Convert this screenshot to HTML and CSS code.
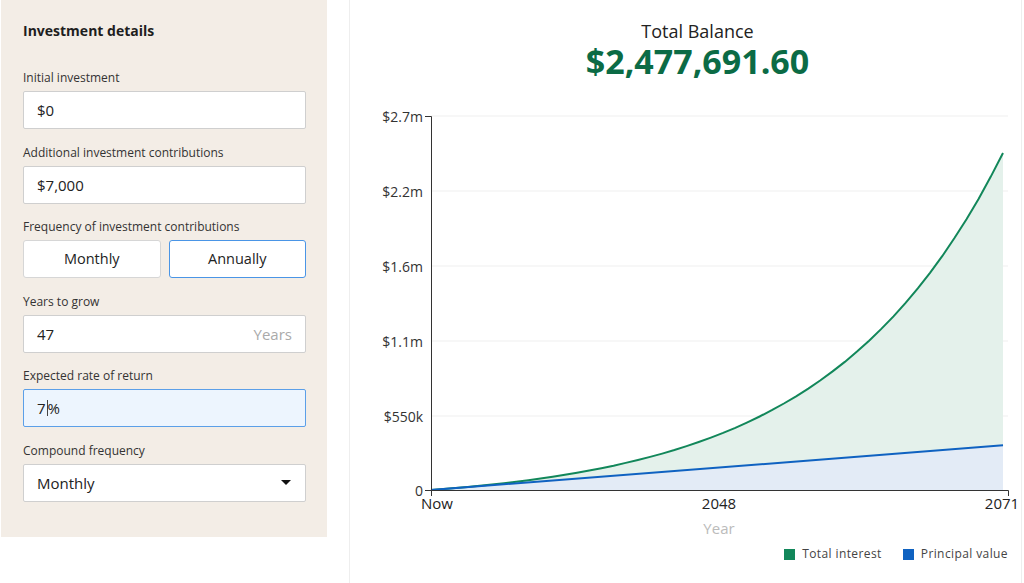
FILE: index.html
```html
<!DOCTYPE html>
<html lang="en">
<head>
    <meta charset="UTF-8">
    <title>Compound Interest Calculator</title>
    <link rel="stylesheet" href="styles.css">
</head>
<body>
    <aside class="panel">
        <h2>Investment details</h2>

        <div class="field">
            <label>Initial investment</label>
            <div class="box">$0</div>
        </div>

        <div class="field">
            <label>Additional investment contributions</label>
            <div class="box">$7,000</div>
        </div>

        <div class="field">
            <label>Frequency of investment contributions</label>
            <div class="toggle">
                <div class="toggle-btn">Monthly</div>
                <div class="toggle-btn active">Annually</div>
            </div>
        </div>

        <div class="field">
            <label>Years to grow</label>
            <div class="box with-unit">47<span class="unit">Years</span></div>
        </div>

        <div class="field">
            <label>Expected rate of return</label>
            <div class="box focused">7<span class="caret"></span>%</div>
        </div>

        <div class="field">
            <label>Compound frequency</label>
            <div class="box with-unit">Monthly<span class="arrow"></span></div>
        </div>
    </aside>

    <section class="results">
        <div class="summary">
            <div class="summary-title">Total Balance</div>
            <div class="summary-amount">$2,477,691.60</div>
        </div>

        <svg class="chart" viewBox="350 100 671 440" width="671" height="440">
            <!-- grid -->
            <g class="grid">
                <line x1="431" y1="116" x2="1008" y2="116"/>
                <line x1="431" y1="191" x2="1008" y2="191"/>
                <line x1="431" y1="266" x2="1008" y2="266"/>
                <line x1="431" y1="341" x2="1008" y2="341"/>
                <line x1="431" y1="416" x2="1008" y2="416"/>
            </g>

            <!-- areas -->
            <polygon class="area-interest" points="431,490 443.2,489.0 455.3,488.0 467.5,486.9 479.7,485.8 491.9,484.5 504,483.2 516.2,481.7 528.4,480.2 540.5,478.5 552.7,476.7 564.9,474.8 577,472.7 589.2,470.5 601.4,468.2 613.6,465.7 625.7,462.9 637.9,460 650.1,456.9 662.2,453.6 674.4,450 686.6,446.1 698.7,442 710.9,437.6 723.1,432.9 735.3,427.8 747.4,422.3 759.6,416.5 771.8,410.2 783.9,403.5 796.1,396.3 808.3,388.6 820.5,380.3 832.6,371.4 844.8,361.9 857,351.6 869.1,340.7 881.3,328.9 893.5,316.4 905.6,302.8 917.8,288.4 930,272.8 942.2,256.2 954.3,238.3 966.5,219.2 978.7,198.7 990.8,176.6 1003,153 1003,490"/>
            <polygon class="area-principal" points="431,490 1003,445.3 1003,490"/>

            <polyline class="line-interest" points="431,490 443.2,489.0 455.3,488.0 467.5,486.9 479.7,485.8 491.9,484.5 504,483.2 516.2,481.7 528.4,480.2 540.5,478.5 552.7,476.7 564.9,474.8 577,472.7 589.2,470.5 601.4,468.2 613.6,465.7 625.7,462.9 637.9,460 650.1,456.9 662.2,453.6 674.4,450 686.6,446.1 698.7,442 710.9,437.6 723.1,432.9 735.3,427.8 747.4,422.3 759.6,416.5 771.8,410.2 783.9,403.5 796.1,396.3 808.3,388.6 820.5,380.3 832.6,371.4 844.8,361.9 857,351.6 869.1,340.7 881.3,328.9 893.5,316.4 905.6,302.8 917.8,288.4 930,272.8 942.2,256.2 954.3,238.3 966.5,219.2 978.7,198.7 990.8,176.6 1003,153"/>
            <line class="line-principal" x1="431" y1="490" x2="1003" y2="445.3"/>

            <!-- axes -->
            <path class="axis" d="M425,116.5H431.5V490.5H425"/>
            <path class="axis" d="M431.5,496V490.5H1008.5V496"/>

            <g class="y-labels">
                <text x="423" y="116">$2.7m</text>
                <text x="423" y="191">$2.2m</text>
                <text x="423" y="266">$1.6m</text>
                <text x="423" y="341">$1.1m</text>
                <text x="423" y="416">$550k</text>
                <text x="423" y="490">0</text>
            </g>

            <g class="x-labels">
                <text x="437" y="509">Now</text>
                <text x="719" y="509">2048</text>
                <text x="1002" y="509">2071</text>
            </g>
            <text class="x-title" x="719" y="534">Year</text>
        </svg>

        <div class="legend">
            <span class="legend-item"><span class="swatch green"></span>Total interest</span>
            <span class="legend-item"><span class="swatch blue"></span>Principal value</span>
        </div>
    </section>
</body>
</html>
```

FILE: styles.css
```css
body {
    margin: 0;
    font-family: "Open Sans", Arial, sans-serif;
    color: #222;
    background: #fff;
    display: flex;
    align-items: flex-start;
}

.panel {
    margin-left: 1px;
    width: 326px;
    height: 537px;
    box-sizing: border-box;
    padding: 21px 21px 0 22px;
    background: #f3ede6;
}
.panel h2 {
    margin: 0 0 29px 0;
    font-size: 14px;
    line-height: 20px;
    font-weight: 700;
    color: #1e1e1e;
}
.field {
    margin-bottom: 15.5px;
}
.field label {
    display: block;
    font-size: 12px;
    line-height: 16px;
    color: #333;
    margin-bottom: 5px;
}
.box {
    height: 38px;
    box-sizing: border-box;
    border: 1px solid #cfcfcf;
    border-radius: 2px;
    background: #fff;
    padding: 0 13px;
    font-size: 15px;
    line-height: 36px;
    color: #222;
    display: flex;
    align-items: center;
}
.with-unit {
    justify-content: space-between;
}
.unit {
    color: #aaa;
}
.focused {
    background: #edf5fe;
    border: 1.5px solid #5b9fe8;
}
.caret {
    display: inline-block;
    width: 1px;
    height: 16px;
    background: #444;
    margin: 0 0 0 1px;
}
.arrow {
    width: 0;
    height: 0;
    border-left: 5px solid transparent;
    border-right: 5px solid transparent;
    border-top: 5px solid #111;
    margin-right: 1px;
}

.toggle {
    display: flex;
    gap: 8px;
}
.toggle-btn {
    flex: 1;
    height: 38px;
    box-sizing: border-box;
    border: 1px solid #d6d6d6;
    border-radius: 3px;
    background: #fff;
    font-size: 14.5px;
    line-height: 36px;
    text-align: center;
    color: #222;
}
.toggle-btn.active {
    border: 1.5px solid #4a95e6;
}

.results {
    margin-left: 22px;
    width: 673px;
    min-height: 583px;
    box-sizing: border-box;
    border-left: 1px solid #eeeeee;
    border-right: 1px solid #eeeeee;
}
.summary {
    padding: 20px 0 0 24px;
    text-align: center;
}
.summary-title {
    font-size: 18px;
    line-height: 22px;
    color: #222;
}
.summary-amount {
    font-size: 34px;
    line-height: 38px;
    font-weight: 700;
    color: #0b6b45;
}
.chart {
    display: block;
    margin-top: 20px;
}
.grid line {
    stroke: #efefef;
    stroke-width: 1;
}
.area-interest {
    fill: #e4f1eb;
}
.area-principal {
    fill: #e3ebf6;
}
.line-interest {
    fill: none;
    stroke: #12875a;
    stroke-width: 2;
}
.line-principal {
    stroke: #0f62c1;
    stroke-width: 2;
}
.axis {
    fill: none;
    stroke: #333;
    stroke-width: 1;
}
.y-labels text {
    font-size: 14px;
    fill: #333;
    text-anchor: end;
    dominant-baseline: central;
}
.x-labels text {
    font-size: 15px;
    fill: #222;
    text-anchor: middle;
}
.x-title {
    font-size: 15px;
    fill: #bbb;
    text-anchor: middle;
}

.legend {
    display: flex;
    justify-content: flex-end;
    gap: 21px;
    padding-right: 13px;
    margin-top: 6px;
    font-size: 12px;
    line-height: 16px;
    color: #444;
    letter-spacing: 0.4px;
}
.legend-item {
    display: flex;
    align-items: center;
}
.swatch {
    width: 11px;
    height: 11px;
    margin-right: 7px;
}
.swatch.green {
    background: #12875a;
}
.swatch.blue {
    background: #0f62c1;
}
```
